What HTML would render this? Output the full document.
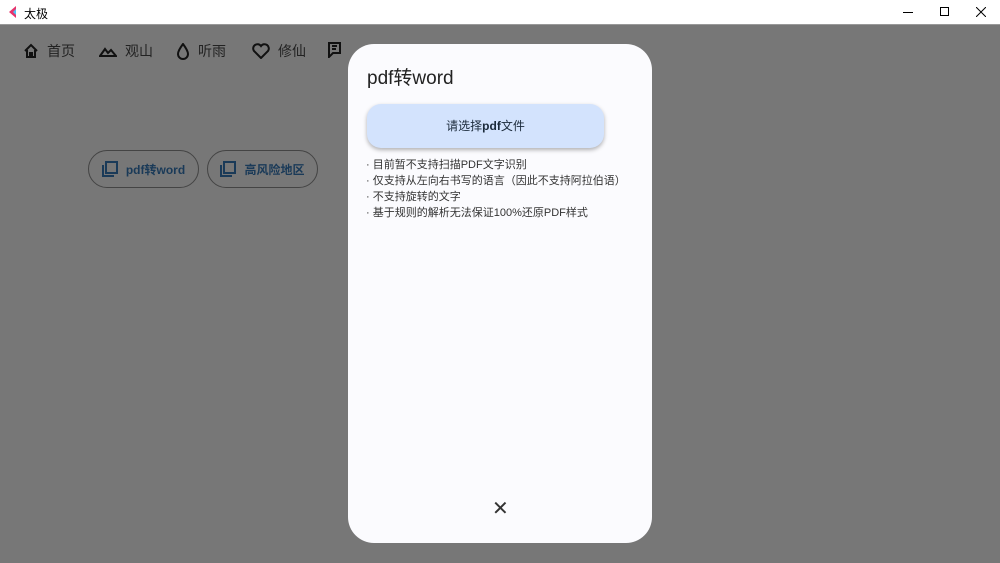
<!DOCTYPE html>
<html><head><meta charset="utf-8"><style>
*{margin:0;padding:0;box-sizing:border-box}
body{width:1000px;height:563px;overflow:hidden;position:relative;background:#777;font-family:"Liberation Sans","Noto Sans CJK SC",sans-serif}
.tb{position:absolute;left:0;top:0;width:1000px;height:25px;background:#fff;border-bottom:1px solid #999}
.tb .t{position:absolute;left:24px;top:5px;font-size:12px;color:#000}
.nav{position:absolute;top:41px;font-size:14px;color:#222;display:flex;align-items:center;gap:8px}
.chip{position:absolute;top:150px;height:38px;border:1px solid #444;border-radius:19px;display:flex;align-items:center;justify-content:center;gap:8px;font-size:12px;font-weight:bold;color:#1a3a58}
.dlg{position:absolute;left:348px;top:44px;width:304px;height:499px;background:#fbfbfe;border-radius:26px}
.dlg h1{position:absolute;left:19px;top:19px;font-size:19px;font-weight:normal;color:#222}
.btn{position:absolute;left:19px;top:60px;width:237px;height:44px;background:#d3e3fd;border-radius:14px;box-shadow:0 2px 4px rgba(0,0,0,.3);font-size:12px;color:#1b2a3a;text-align:center;line-height:44px}
.list{position:absolute;left:18px;top:113px;font-size:11px;line-height:16px;color:#333}
.x{position:absolute;left:144px;top:452px;font-size:20px;color:#333}
</style></head><body>
<div class="tb">
<svg style="position:absolute;left:8px;top:6px" width="10" height="12"><path d="M8 0L1 6L8 12Z" fill="#e8336b"/><path d="M8 3L5 6L8 9Z" fill="#4fc3f7"/></svg>
<span class="t">太极</span>
<svg style="position:absolute;left:903px;top:12px" width="10" height="2"><rect width="10" height="1" fill="#000"/></svg>
<svg style="position:absolute;left:940px;top:7px" width="10" height="10"><rect x=".5" y=".5" width="8" height="8" fill="none" stroke="#000"/></svg>
<svg style="position:absolute;left:976px;top:7px" width="10" height="10"><path d="M0 0L10 10M10 0L0 10" stroke="#000"/></svg>
</div>
<div class="nav" style="left:23px"><svg width="16" height="16"><path d="M2 8L8 2L14 8M4 7V14H7V10H9V14H12V7" fill="none" stroke="#111" stroke-width="2"/></svg>首页</div>
<div class="nav" style="left:99px"><svg width="18" height="12"><path d="M1 11L6 4L9 8L12 5L17 11Z" fill="none" stroke="#111" stroke-width="2"/></svg>观山</div>
<div class="nav" style="left:176px"><svg width="14" height="17"><path d="M7 1C4 5 2 8 2 11A5 5 0 0 0 12 11C12 8 10 5 7 1Z" fill="none" stroke="#111" stroke-width="2"/></svg>听雨</div>
<div class="nav" style="left:252px"><svg width="18" height="16"><path d="M9 15L2 8A4 4 0 0 1 9 3A4 4 0 0 1 16 8Z" fill="none" stroke="#111" stroke-width="2"/></svg>修仙</div>
<div class="nav" style="left:328px"><svg width="18" height="17"><path d="M1 2H12V12H5L1 16Z M4 5H9M4 8H8" fill="none" stroke="#111" stroke-width="2"/></svg></div>
<div class="chip" style="left:88px;width:111px"><svg width="16" height="16"><rect x="4" y="1" width="11" height="11" fill="none" stroke="#1a3a58" stroke-width="2"/><path d="M1 4V15H12" fill="none" stroke="#1a3a58" stroke-width="2"/></svg>pdf转word</div>
<div class="chip" style="left:207px;width:111px"><svg width="16" height="16"><rect x="4" y="1" width="11" height="11" fill="none" stroke="#1a3a58" stroke-width="2"/><path d="M1 4V15H12" fill="none" stroke="#1a3a58" stroke-width="2"/></svg>高风险地区</div>
<div class="dlg">
<h1>pdf转word</h1>
<div class="btn">请选择<b>pdf</b>文件</div>
<div class="list">· 目前暂不支持扫描PDF文字识别<br>· 仅支持从左向右书写的语言（因此不支持阿拉伯语）<br>· 不支持旋转的文字<br>· 基于规则的解析无法保证100%还原PDF样式</div>
<div class="x">✕</div>
</div>
</body></html>
